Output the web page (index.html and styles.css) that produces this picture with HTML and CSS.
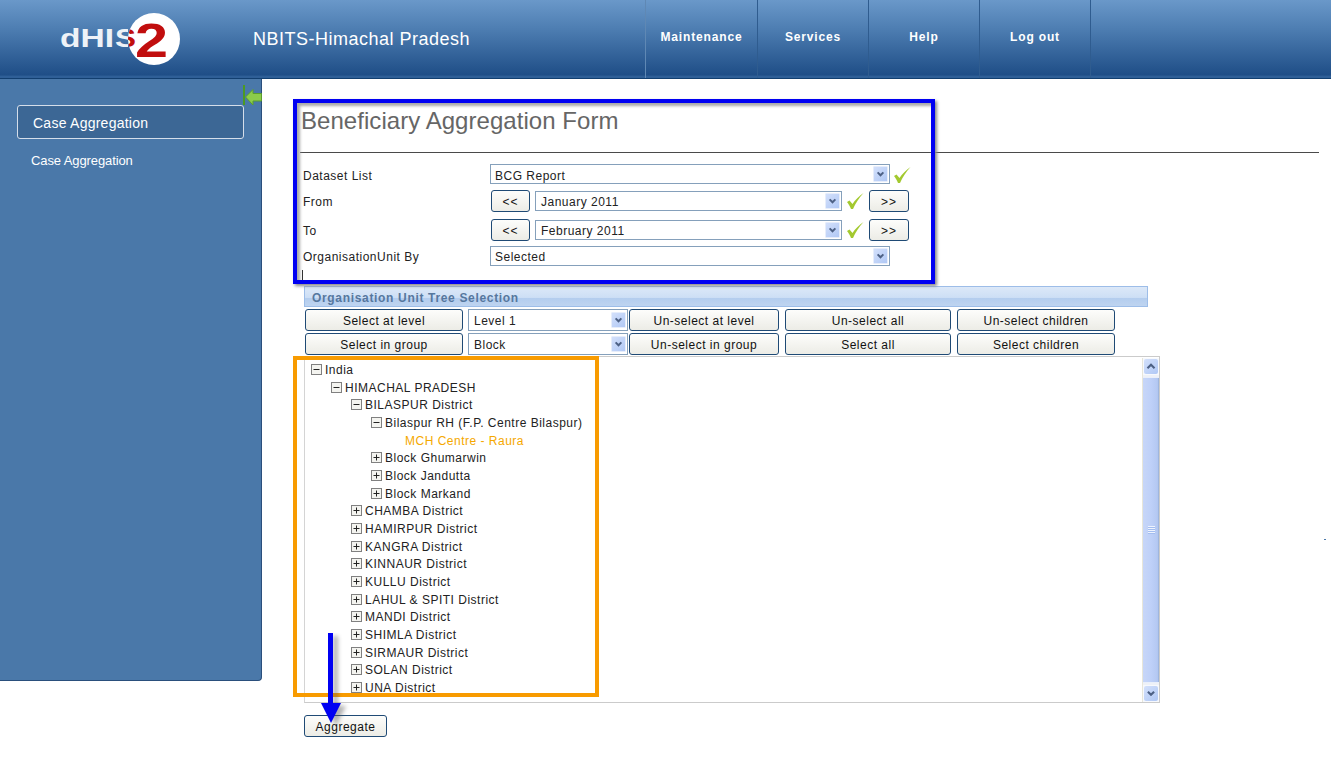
FILE: index.html
```html
<!DOCTYPE html>
<html lang="en">
<head>
<meta charset="utf-8">
<title>Beneficiary Aggregation Form</title>
<link rel="stylesheet" href="styles.css">
</head>
<body>
<svg class="defs" width="0" height="0" aria-hidden="true">
  <symbol id="chev" viewBox="0 0 15 17">
    <path d="M4 6.5 L7.5 10 L11 6.5" fill="none" stroke="#4d6185" stroke-width="2.4"/>
  </symbol>
  <symbol id="chevup" viewBox="0 0 15 17">
    <path d="M3.5 10.5 L7.5 6.5 L11.5 10.5" fill="none" stroke="#4d6185" stroke-width="2.4"/>
  </symbol>
  <symbol id="check" viewBox="0 0 18 18">
    <path d="M1 10 L3.500 8.500 L6.500 12 C9 8 13 4 17.500 1 C13 6 9.500 11 7 17 L5 17 C4 14 2.500 12 1 10 Z" fill="#a3c92f"/>
  </symbol>
  <symbol id="minus" viewBox="0 0 11 11">
    <rect x=".5" y=".5" width="10" height="10" fill="#f4f4f0" stroke="#808080"/>
    <path d="M2.500 5.500 H8.500" stroke="#222" stroke-width="1"/>
  </symbol>
  <symbol id="plus" viewBox="0 0 11 11">
    <rect x=".5" y=".5" width="10" height="10" fill="#f4f4f0" stroke="#808080"/>
    <path d="M2.500 5.500 H8.500 M5.500 2.500 V8.500" stroke="#222" stroke-width="1"/>
  </symbol>
</svg>

<header class="topbar">
  <div class="logo-cell">
    <svg class="logo" width="130" height="60" viewBox="0 0 130 60">
      <defs>
        <clipPath id="in-disc"><circle cx="98" cy="26" r="26"/></clipPath>
        <clipPath id="off-disc"><rect x="0" y="0" width="72" height="60"/></clipPath>
      </defs>
      <circle cx="98" cy="26" r="26" fill="#fff"/>
      <text x="4" y="34" class="logo-word" textLength="54" lengthAdjust="spacingAndGlyphs">dHI</text>
      <text x="59" y="34" class="logo-word" textLength="21" lengthAdjust="spacingAndGlyphs" clip-path="url(#off-disc)">S</text>
      <text x="59" y="34" class="logo-word logo-red" textLength="21" lengthAdjust="spacingAndGlyphs" clip-path="url(#in-disc)">S</text>
      <text x="79" y="44" class="logo-two" textLength="33" lengthAdjust="spacingAndGlyphs">2</text>
    </svg>
  </div>
  <div class="site-title">NBITS-Himachal Pradesh</div>
  <nav class="topnav">
    <a class="topnav-item">Maintenance</a>
    <a class="topnav-item">Services</a>
    <a class="topnav-item">Help</a>
    <a class="topnav-item">Log out</a>
  </nav>
</header>

<div class="page">
  <aside class="sidebar">
    <div class="toggle">
      <svg width="19" height="21" viewBox="0 0 19 21">
        <path d="M1 0 V20" stroke="#4c9a22" stroke-width="2"/>
        <path d="M2.500 12 L10 4.500 V8.500 H18.500 V16 H10 V20 Z" fill="#8ccb4b" stroke="#5b9e2c"/>
      </svg>
    </div>
    <div class="side-head">Case Aggregation</div>
    <a class="side-link">Case Aggregation</a>
  </aside>

  <main class="main">
    <h1 class="title">Beneficiary Aggregation Form</h1>

    <section class="form">
      <div class="row row-a">
        <label class="lbl">Dataset List</label>
        <div class="val">
          <div class="sel sel-wide"><span>BCG Report</span><svg class="arrow"><use href="#chev"/></svg></div>
          <svg class="ok ok-a"><use href="#check"/></svg>
        </div>
      </div>
      <div class="row row-b">
        <label class="lbl">From</label>
        <div class="val">
          <button class="btn btn-nav">&lt;&lt;</button>
          <div class="sel sel-mid"><span>January 2011</span><svg class="arrow"><use href="#chev"/></svg></div>
          <svg class="ok"><use href="#check"/></svg>
          <button class="btn btn-nav">&gt;&gt;</button>
        </div>
      </div>
      <div class="row row-c">
        <label class="lbl">To</label>
        <div class="val">
          <button class="btn btn-nav">&lt;&lt;</button>
          <div class="sel sel-mid"><span>February 2011</span><svg class="arrow"><use href="#chev"/></svg></div>
          <svg class="ok"><use href="#check"/></svg>
          <button class="btn btn-nav">&gt;&gt;</button>
        </div>
      </div>
      <div class="row row-d">
        <label class="lbl">OrganisationUnit By</label>
        <div class="val">
          <div class="sel sel-wide"><span>Selected</span><svg class="arrow"><use href="#chev"/></svg></div>
        </div>
      </div>
    </section>

    <section class="orgunit">
      <div class="org-bar">Organisation Unit Tree Selection</div>
      <div class="tools">
        <button class="btn">Select at level</button>
        <div class="sel"><span>Level 1</span><svg class="arrow"><use href="#chev"/></svg></div>
        <button class="btn">Un-select at level</button>
        <button class="btn">Un-select all</button>
        <button class="btn">Un-select children</button>
        <button class="btn">Select in group</button>
        <div class="sel"><span>Block</span><svg class="arrow"><use href="#chev"/></svg></div>
        <button class="btn">Un-select in group</button>
        <button class="btn">Select all</button>
        <button class="btn">Select children</button>
      </div>

      <div class="tree-box">
        <ul class="tree">
          <li><svg class="tg"><use href="#minus"/></svg>India
            <ul>
              <li><svg class="tg"><use href="#minus"/></svg>HIMACHAL PRADESH
                <ul>
                  <li><svg class="tg"><use href="#minus"/></svg>BILASPUR District
                    <ul>
                      <li><svg class="tg"><use href="#minus"/></svg>Bilaspur RH (F.P. Centre Bilaspur)
                        <ul><li class="picked">MCH Centre - Raura</li></ul>
                      </li>
                      <li><svg class="tg"><use href="#plus"/></svg>Block Ghumarwin</li>
                      <li><svg class="tg"><use href="#plus"/></svg>Block Jandutta</li>
                      <li><svg class="tg"><use href="#plus"/></svg>Block Markand</li>
                    </ul>
                  </li>
                  <li><svg class="tg"><use href="#plus"/></svg>CHAMBA District</li>
                  <li><svg class="tg"><use href="#plus"/></svg>HAMIRPUR District</li>
                  <li><svg class="tg"><use href="#plus"/></svg>KANGRA District</li>
                  <li><svg class="tg"><use href="#plus"/></svg>KINNAUR District</li>
                  <li><svg class="tg"><use href="#plus"/></svg>KULLU District</li>
                  <li><svg class="tg"><use href="#plus"/></svg>LAHUL &amp; SPITI District</li>
                  <li><svg class="tg"><use href="#plus"/></svg>MANDI District</li>
                  <li><svg class="tg"><use href="#plus"/></svg>SHIMLA District</li>
                  <li><svg class="tg"><use href="#plus"/></svg>SIRMAUR District</li>
                  <li><svg class="tg"><use href="#plus"/></svg>SOLAN District</li>
                  <li><svg class="tg"><use href="#plus"/></svg>UNA District</li>
                </ul>
              </li>
            </ul>
          </li>
        </ul>
        <div class="scrollbar">
          <div class="sb-btn"><svg class="sb-ic"><use href="#chevup"/></svg></div>
          <div class="sb-thumb"><span class="grip"></span></div>
          <div class="sb-btn"><svg class="sb-ic"><use href="#chev"/></svg></div>
        </div>
      </div>

      <button class="btn btn-go">Aggregate</button>
    </section>
  </main>
</div>

<div class="note-blue"></div>
<div class="note-caret"></div>
<div class="note-orange"></div>
<div class="note-speck"></div>
<svg class="note-arrow" width="34" height="96" viewBox="0 0 34 96">
  <defs>
    <filter id="soft" x="-50%" y="-20%" width="200%" height="140%">
      <feGaussianBlur stdDeviation="2"/>
    </filter>
  </defs>
  <path d="M8 0 H13 V70 H21 L11 90 L1 70 H8 Z" fill="#555" opacity=".45" filter="url(#soft)" transform="translate(5 3)"/>
  <path d="M8 0 H13 V70 H21 L11 90 L1 70 H8 Z" fill="#0000f2"/>
</svg>
</body>
</html>
```
FILE: styles.css
```css
* { box-sizing: border-box; }
html, body { margin: 0; height: 100%; }
body {
  position: relative;
  overflow: hidden;
  background: #fff;
  font-family: "Liberation Sans", Arial, sans-serif;
  font-size: 12px;
  letter-spacing: .5px;
  color: #222;
}
.defs { position: absolute; }

/* header */
.topbar {
  display: flex;
  align-items: stretch;
  height: 79px;
  background: linear-gradient(#6a98c9 0%, #4f7fb3 35%, #1f4e87 96%, #2f5f97 98%);
  border-bottom: 1px solid #123f70;
}
.logo-cell { width: 253px; padding: 13px 0 0 56px; }
.logo { display: block; }
.logo-word {
  font-family: "Liberation Sans", sans-serif;
  font-size: 25px;
  font-weight: 700;
  letter-spacing: 0;
  fill: #eef2f7;
}
.logo-red { fill: #c10e0e; }
.logo-two {
  font-family: "Liberation Sans", sans-serif;
  font-size: 48px;
  font-weight: 700;
  letter-spacing: 0;
  fill: #c10e0e;
}
.site-title {
  width: 392px;
  align-self: center;
  font-size: 18px;
  letter-spacing: .5px;
  color: #fff;
}
.topnav { display: flex; border-left: 1px solid #5f88b4; }
.topnav-item {
  display: flex;
  align-items: center;
  justify-content: center;
  width: 111px;
  padding-bottom: 4px;
  border-right: 1px solid #2f5c8f;
  font-weight: 700;
  letter-spacing: .85px;
  color: #fff;
}
.topnav-item:first-child { width: 112px; }

/* page */
.page { display: flex; align-items: flex-start; }
.sidebar {
  position: relative;
  flex: none;
  width: 262px;
  height: 602px;
  padding: 26px 0 0 17px;
  background: #4a78a9;
  border-right: 1px solid #2a4f7c;
  border-bottom: 1px solid #2a4f7c;
  border-bottom-right-radius: 4px;
  color: #fff;
}
.toggle { position: absolute; top: 6px; left: 243px; line-height: 0; }
.side-head {
  width: 227px;
  height: 34px;
  padding-left: 15px;
  line-height: 34px;
  font-size: 14px;
  letter-spacing: .25px;
  background: #3c6795;
  border: 1px solid #d5deea;
  border-radius: 3px;
}
.side-link {
  display: block;
  margin: 14px 0 0 14px;
  font-size: 13px;
  letter-spacing: -.1px;
  color: #fff;
}

/* main */
.main { flex: 1; min-width: 0; padding: 0 12px 0 38px; }
.title {
  height: 46px;
  margin: 28px 0 0;
  padding-left: 1px;
  font-size: 24px;
  font-weight: 400;
  letter-spacing: .05px;
  line-height: 28px;
  color: #666;
  border-bottom: 1px solid #4a4a4a;
}
.form { padding: 11px 0 0 3px; }
.row { display: grid; grid-template-columns: 187px 1fr; align-items: center; }
.row-a { height: 20px; }
.row-b { height: 22px; margin-top: 6px; }
.row-c { height: 22px; margin-top: 7px; }
.row-d { height: 20px; margin-top: 5px; }
.val { display: flex; align-items: center; height: 100%; }
.lbl { padding-top: 2px; }
.row-a .lbl { padding-top: 4px; }

.sel {
  display: flex;
  align-items: center;
  justify-content: space-between;
  height: 20px;
  padding: 0 1px 0 4px;
  background: #fff;
  border: 1px solid #85a0bb;
}
.sel > span { padding-top: 2px; }
.row-a .sel > span { padding-top: 4px; }
.sel-wide { width: 400px; }
.sel-mid { width: 307px; margin-left: 5px; padding-left: 5px; }
.arrow {
  flex: none;
  width: 15px;
  height: 16px;
  background: linear-gradient(135deg, #d3e0fb, #b0c8f5);
  border: 1px solid #e6edfb;
  border-radius: 1px;
}
.ok { flex: none; width: 18px; height: 18px; margin: 0 5px 0 4px; }
.ok-a { margin-left: 3px; margin-top: 2px; }

.btn {
  height: 22px;
  padding: 2px 0 0;
  font: inherit;
  letter-spacing: inherit;
  color: #111;
  background: linear-gradient(#fdfdfb, #ecece6);
  border: 1px solid #1f4a75;
  border-radius: 3px;
}
.btn-nav { flex: none; width: 39px; margin-left: 1px; letter-spacing: 1px; }
.ok + .btn-nav { margin-left: 0; width: 40px; }

/* org unit */
.orgunit { margin-top: 20px; padding-left: 4px; }
.org-bar {
  width: 844px;
  height: 21px;
  padding: 1px 0 0 7px;
  line-height: 20px;
  font-weight: 700;
  letter-spacing: .67px;
  color: #56779e;
  background: linear-gradient(#dce8f8 0%, #cddff5 55%, #b4cdee 60%, #bed4f0 100%);
  border: 1px solid #9dbde8;
}
.tools {
  display: grid;
  grid-template-columns: 163px 161px 156px 172px 158px;
  row-gap: 2px;
  margin: 2px 0 0 1px;
}
.tools > :nth-child(5n+1) { width: 158px; }
.tools > :nth-child(5n+2) { width: 160px; height: 22px; padding-left: 5px; }
.tools > :nth-child(5n+3) { width: 150px; }
.tools > :nth-child(5n+4) { width: 166px; }
.tools > :nth-child(5n) { width: 158px; }

.tree-box {
  display: flex;
  width: 856px;
  height: 347px;
  margin-top: 1px;
  overflow: hidden;
  border: 1px solid #cbcbcb;
  border-left-color: #d4d4d4;
}
.tree {
  flex: 1;
  margin: 0;
  padding: 5px 0 0 6px;
  list-style: none;
  overflow: hidden;
}
.tree ul { margin: 0; padding: 0 0 0 20px; list-style: none; }
.tree li { line-height: 17.67px; white-space: nowrap; }
.tg { width: 11px; height: 11px; margin-right: 3px; vertical-align: -1px; }
.picked { margin-left: 14px; color: #f5a800; }

.scrollbar {
  display: flex;
  flex: none;
  flex-direction: column;
  width: 17px;
  margin: 1px 0 0;
  background: #eef1f7;
  border-left: 1px solid #e8e6da;
}
.sb-btn {
  flex: none;
  height: 17px;
  padding: 1px;
  background: #f7f9fd;
}
.sb-ic {
  display: block;
  width: 14px;
  height: 15px;
  background: linear-gradient(135deg, #d3e0fb, #b0c8f5);
  border-radius: 2px;
}
.sb-thumb {
  display: flex;
  flex: 1;
  align-items: center;
  justify-content: center;
  margin: 2px 0;
  background: linear-gradient(90deg, #c7d6f8, #bed0f8 50%, #b4c8f2 90%, #95aed6);
  border-top: 1px solid #e9effb;
  border-bottom: 1px solid #e9effb;
}
.grip {
  width: 7px;
  height: 8px;
  background: repeating-linear-gradient(#eef3fe 0 1px, #a3bdf0 1px 2px);
}
.btn-go { display: block; width: 83px; margin-top: 12px; }

/* annotations drawn over the screenshot */
.note-blue {
  position: absolute;
  left: 293px;
  top: 99px;
  width: 642px;
  height: 185px;
  border: 4px solid #0000f2;
  box-shadow: 2px 2px 3px #8a8a8a, inset 3px 3px 3px #a8a8a8;
}
.note-caret {
  position: absolute;
  left: 302px;
  top: 270px;
  width: 1px;
  height: 10px;
  background: #333;
}
.note-orange {
  position: absolute;
  left: 293px;
  top: 356px;
  width: 306px;
  height: 341px;
  border: 4px solid #f89b00;
}
.note-speck {
  position: absolute;
  left: 1324px;
  top: 539px;
  width: 2px;
  height: 1px;
  background: #4a78a9;
}
.note-arrow { position: absolute; left: 320px; top: 633px; }
```
